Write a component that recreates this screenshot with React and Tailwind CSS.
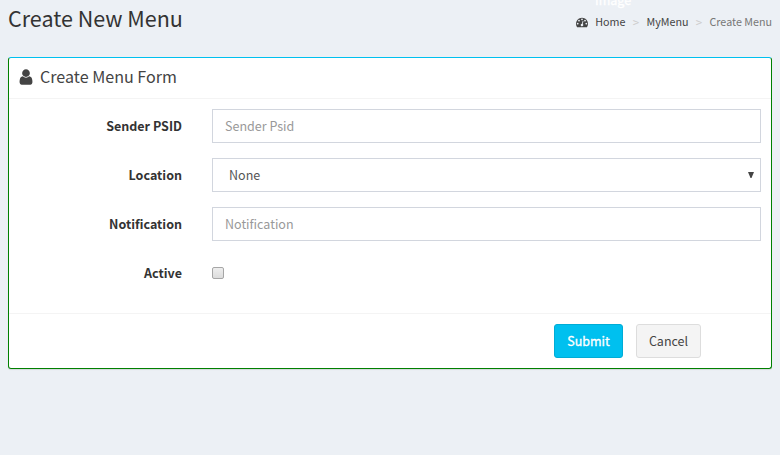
function UserIcon() {
  return (
    <svg viewBox="0 0 1792 1792" className="mb-[3px] h-[18px] w-[18px] fill-[#444]" aria-hidden="true">
      <path d="M1536 1399q0 109-62.5 187t-150.5 78h-854q-88 0-150.5-78t-62.5-187q0-85 8.5-160.5t31.5-152 58.5-131 94-89 134.5-34.5q131 128 313 128t313-128q76 0 134.5 34.5t94 89 58.5 131 31.5 152 8.5 160.5zm-256-887q0 159-112.5 271.5t-271.5 112.5-271.5-112.5-112.5-271.5 112.5-271.5 271.5-112.5 271.5 112.5 112.5 271.5z" />
    </svg>
  );
}

function DashboardIcon() {
  return (
    <svg viewBox="0 0 1792 1792" className="h-3 w-3 fill-[#444]" aria-hidden="true">
      <path d="M384 1152q0-53-37.5-90.5t-90.5-37.5-90.5 37.5-37.5 90.5 37.5 90.5 90.5 37.5 90.5-37.5 37.5-90.5zm192-448q0-53-37.5-90.5t-90.5-37.5-90.5 37.5-37.5 90.5 37.5 90.5 90.5 37.5 90.5-37.5 37.5-90.5zm428 481l101-382q6-26-7.5-48.5t-38.5-29.5-48 6.5-30 39.5l-101 382q-60 5-107 43.5t-63 98.5q-20 77 20 146t117 89 146-20 89-117q16-60-6-117t-72-91zm660-33q0-53-37.5-90.5t-90.5-37.5-90.5 37.5-37.5 90.5 37.5 90.5 90.5 37.5 90.5-37.5 37.5-90.5zm-640-640q0-53-37.5-90.5t-90.5-37.5-90.5 37.5-37.5 90.5 37.5 90.5 90.5 37.5 90.5-37.5 37.5-90.5zm448 192q0-53-37.5-90.5t-90.5-37.5-90.5 37.5-37.5 90.5 37.5 90.5 90.5 37.5 90.5-37.5 37.5-90.5zm320 448q0 261-141 483-19 29-54 29h-1402q-35 0-54-29-141-221-141-483 0-182 71-348t191-286 286-191 348-71 348 71 286 191 191 286 71 348z" />
    </svg>
  );
}

function Row({ label, children }) {
  return (
    <div className="flex h-[34px] items-center">
      <label className="w-[173px] shrink-0 text-right font-bold text-[#333]">{label}</label>
      <div className="ml-[30px] mr-2.5 flex flex-1">{children}</div>
    </div>
  );
}

const field = "h-[34px] w-full border border-[#d2d6de] bg-white px-3 leading-5 text-[#555] placeholder:text-[#999] outline-none";

export default function App() {
  return (
    <div className="relative h-[455px] w-[780px] overflow-hidden bg-[#ecf0f5] px-2 font-['Noto_Sans_CJK_SC',sans-serif] text-[12.53px] leading-5 text-[#333]">
      <span className="absolute left-[595px] top-[-10px] text-[12.53px] text-white [-webkit-text-stroke:0.3px_white]">Image</span>
      <header className="flex h-[57px] items-start justify-between">
        <h1 className="pt-[5px] text-[21.5px] leading-[26px]">Create New Menu</h1>
        <nav className="flex items-center pt-3 text-[10.74px] text-[#444]">
          <DashboardIcon />
          <span className="ml-[7.5px]">Home</span>
          <span className="mx-[7px] w-[7px] text-center text-[11.5px] text-[#ccc]">&gt;</span>
          <span>MyMenu</span>
          <span className="mx-[7px] w-[7px] text-center text-[11.5px] text-[#ccc]">&gt;</span>
          <span className="text-[#777]">Create Menu</span>
        </nav>
      </header>
      <section className="h-[312px] rounded-[3px] border border-[#008000] border-t-[#00c0ef] bg-white shadow-[0_1px_1px_rgba(0,0,0,0.1)]">
        <div className="flex h-[41px] items-center border-b border-[#f4f4f4] pl-[7.5px]">
          <UserIcon />
          <h3 className="mb-1 ml-[5.5px] text-[16.1px] leading-[18px] text-[#444]">Create Menu Form</h3>
        </div>
        <div className="flex h-[214px] flex-col gap-[15px] pt-2.5">
          <Row label="Sender PSID">
            <input className={field + " pb-[2px]"} placeholder="Sender Psid" />
          </Row>
          <Row label="Location">
            <div className={field + " flex items-center justify-between pl-4 pr-[6px]"}>
              <span>None</span>
              <svg viewBox="0 0 6 6" className="h-[6px] w-[6px] fill-[#444]" aria-hidden="true">
                <path d="M0 0h6L3.5 6h-1z" />
              </svg>
            </div>
          </Row>
          <Row label="Notification">
            <input className={field + " pb-[2px]"} placeholder="Notification" />
          </Row>
          <Row label="Active">
            <input
              type="checkbox"
              className="h-3 w-3 appearance-none rounded-[2px] border border-[#a6a6a6] bg-linear-to-b from-[#eee] to-[#dcdcdc]"
            />
          </Row>
        </div>
        <div className="flex h-[55px] gap-[13px] border-t border-[#f4f4f4] pl-[545px] pt-2.5">
          <button className="h-[34px] w-[69px] rounded-[3px] border border-[#00acd6] bg-[#00c0ef] text-white [-webkit-text-stroke:0.3px_white]">Submit</button>
          <button className="h-[34px] w-[65px] rounded-[3px] border border-[#ddd] bg-[#f4f4f4] text-[#444]">Cancel</button>
        </div>
      </section>
    </div>
  );
}
